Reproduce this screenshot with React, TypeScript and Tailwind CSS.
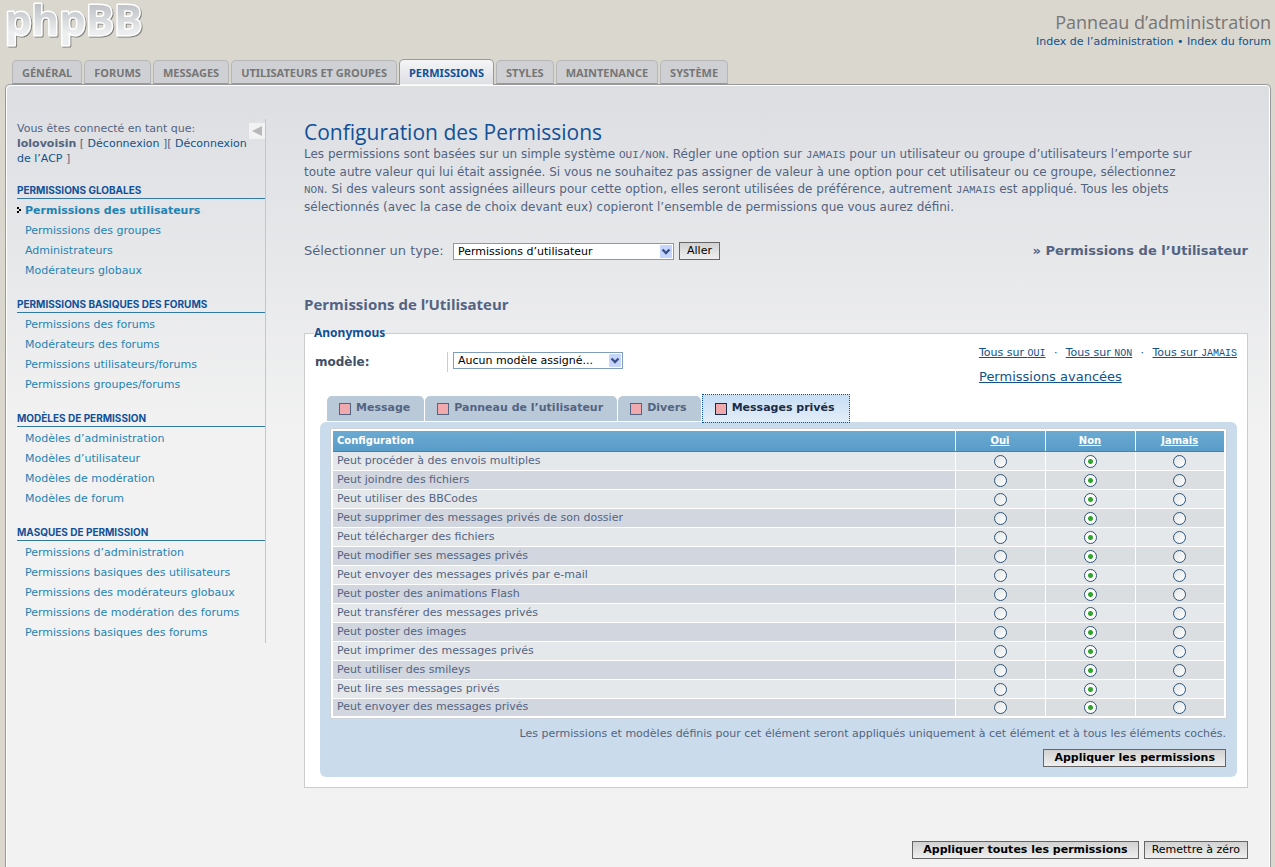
import React, { useState } from "react";
import clsx from "clsx";

const TABS = [
  "Général",
  "Forums",
  "Messages",
  "Utilisateurs et groupes",
  "Permissions",
  "Styles",
  "Maintenance",
  "Système",
];

const MENU = [
  {
    title: "Permissions globales",
    links: [
      "Permissions des utilisateurs",
      "Permissions des groupes",
      "Administrateurs",
      "Modérateurs globaux",
    ],
  },
  {
    title: "Permissions basiques des forums",
    links: [
      "Permissions des forums",
      "Modérateurs des forums",
      "Permissions utilisateurs/forums",
      "Permissions groupes/forums",
    ],
  },
  {
    title: "Modèles de permission",
    links: [
      "Modèles d’administration",
      "Modèles d’utilisateur",
      "Modèles de modération",
      "Modèles de forum",
    ],
  },
  {
    title: "Masques de permission",
    links: [
      "Permissions d’administration",
      "Permissions basiques des utilisateurs",
      "Permissions des modérateurs globaux",
      "Permissions de modération des forums",
      "Permissions basiques des forums",
    ],
  },
];

const CATEGORIES = ["Message", "Panneau de l’utilisateur", "Divers", "Messages privés"];

const OPTIONS = [
  "Peut procéder à des envois multiples",
  "Peut joindre des fichiers",
  "Peut utiliser des BBCodes",
  "Peut supprimer des messages privés de son dossier",
  "Peut télécharger des fichiers",
  "Peut modifier ses messages privés",
  "Peut envoyer des messages privés par e-mail",
  "Peut poster des animations Flash",
  "Peut transférer des messages privés",
  "Peut poster des images",
  "Peut imprimer des messages privés",
  "Peut utiliser des smileys",
  "Peut lire ses messages privés",
  "Peut envoyer des messages privés",
];

const VALUES = ["Oui", "Non", "Jamais"];

const Logo = () => (
  <svg width="150" height="50" role="img" aria-label="phpBB" className="overflow-visible">
    <defs>
      <linearGradient id="logo-fill" x1="0" y1="0" x2="0" y2="1">
        <stop offset="0.2" stopColor="#b9bdc1" />
        <stop offset="0.75" stopColor="#eceeef" />
      </linearGradient>
      <filter id="logo-shadow" x="-10%" y="-10%" width="120%" height="130%">
        <feDropShadow dx="1" dy="1" stdDeviation="0.7" floodColor="#77756f" floodOpacity="0.9" />
      </filter>
    </defs>
    <text
      x="0"
      y="35"
      fontFamily="'Open Sans', sans-serif"
      fontWeight="700"
      fontSize="42"
      fill="url(#logo-fill)"
      stroke="#fff"
      strokeWidth="3"
      strokeLinejoin="round"
      paintOrder="stroke"
      filter="url(#logo-shadow)"
    >
      phpBB
    </text>
  </svg>
);

const Code = ({ children }: { children: React.ReactNode }) => (
  <code className="font-['Liberation_Mono',monospace] text-[11px]">{children}</code>
);

interface SelectProps {
  id: string;
  value: string;
  className: string;
}

const Select = ({ id, value, className }: SelectProps) => (
  <span className={clsx("relative inline-flex", className)}>
    <select
      id={id}
      defaultValue={value}
      className="h-[17px] w-full appearance-none border border-[#7f9db9] bg-white pr-4 pl-1 text-[11px] leading-[15px] text-black"
    >
      <option>{value}</option>
    </select>
    <svg
      viewBox="0 0 12 13"
      className="pointer-events-none absolute top-0.5 right-0.5 h-[13px] w-3"
      aria-hidden="true"
    >
      <rect width="12" height="13" rx="1" fill="#c6d5fb" />
      <path d="M2.5 4.5 6 8l3.5-3.5" fill="none" stroke="#3c5287" strokeWidth="2.4" />
    </svg>
  </span>
);

interface ButtonProps {
  children: React.ReactNode;
  bold?: boolean;
}

const Button = ({ children, bold }: ButtonProps) => (
  <button
    type="button"
    className={clsx(
      "h-[18px] border border-[#666] bg-linear-to-b from-[#d2d2d2] to-[#efefef] text-[11px] leading-4 whitespace-nowrap text-black",
      bold ? "px-2.5 font-bold" : "px-[7px]"
    )}
  >
    {children}
  </button>
);

const Header = () => (
  <header className="flex h-[59px] items-start justify-between pr-1 pl-[5px]">
    <Logo />
    <div className="pt-2.5 text-right">
      <p className="font-['Open_Sans',sans-serif] text-lg leading-6 text-[#767676]">
        Panneau d’administration
      </p>
      <p className="text-[11px] leading-4 text-[#105289]">
        <a href="#">Index de l’administration</a> • <a href="#">Index du forum</a>
      </p>
    </div>
  </header>
);

const Tabs = () => (
  <nav className="relative z-10 -mb-px flex items-end gap-0.5 pl-3 font-['Noto_Sans',sans-serif] text-[11px] font-bold uppercase">
    {TABS.map((tab) => (
      <a
        key={tab}
        href="#"
        className={clsx(
          "rounded-t-[5px] border px-[9px] whitespace-nowrap",
          tab === "Permissions"
            ? "h-[26px] border-[#999] border-b-transparent bg-linear-to-b from-[#f4f5f6] to-[#dddfe3] leading-[25px] text-[#115098]"
            : "mb-px h-6 border-[#b5b6b8] border-b-[#999] bg-[#cfd0d3] leading-[23px] text-[#767676]"
        )}
      >
        {tab}
      </a>
    ))}
  </nav>
);

const Sidebar = () => (
  <aside className="relative w-[249px] shrink-0 border-r border-[#c4c6c9] pt-0.5">
    <button
      type="button"
      aria-label="Masquer le menu"
      className="absolute top-1 right-0 flex h-4 w-4 items-center justify-center bg-[#f2f2f2]"
    >
      <svg viewBox="0 0 10 10" className="h-2.5 w-2.5">
        <path d="M0 5 10 0v10z" fill="#b7b8ba" />
      </svg>
    </button>
    <p className="text-[11px] leading-[15px] whitespace-nowrap text-[#536482]">
      Vous êtes connecté en tant que:
      <br />
      <strong>lolovoisin</strong> [{" "}
      <a href="#" className="text-[#105289]">
        Déconnexion
      </a>{" "}
      ][{" "}
      <a href="#" className="text-[#105289]">
        Déconnexion
        <br />
        de l’ACP
      </a>{" "}
      ]
    </p>
    {MENU.map((block, i) => (
      <section key={block.title} className={i === 0 ? "mt-4" : "mt-[15px]"}>
        <h2 className="h-[17px] border-b border-[#327aa5] font-['Inter',sans-serif] text-[10px] leading-4 font-bold whitespace-nowrap text-[#115098] uppercase">
          {block.title}
        </h2>
        <ul className="pt-0.5">
          {block.links.map((link) => {
            const active = link === "Permissions des utilisateurs";
            return (
              <li key={link} className="relative pl-2 text-[11px] leading-5">
                {active && (
                  <svg viewBox="0 0 4 6" className="absolute top-1.5 left-0 h-1.5 w-1">
                    <path d="M0 0h2v2h2v2H2v2H0V4h2V2H0z" fill="#000" />
                  </svg>
                )}
                <a
                  href="#"
                  className={clsx("whitespace-nowrap text-[#1f83b4]", active && "font-bold")}
                >
                  {link}
                </a>
              </li>
            );
          })}
        </ul>
      </section>
    ))}
  </aside>
);

const PermissionTable = () => (
  <table className="w-full border-2 border-white bg-white text-[11px] outline outline-[#ccd3da]">
    <thead>
      <tr className="h-[21px] bg-linear-to-b from-[#6cabd3] to-[#589cc8] text-[10px] text-white">
        <th className="border-b border-b-[#3f85b2] px-1 text-left font-bold">Configuration</th>
        {VALUES.map((value) => (
          <th
            key={value}
            className="w-[90px] border-b border-l border-b-[#3f85b2] border-l-white font-bold"
          >
            <a href="#" className="underline">
              {value}
            </a>
          </th>
        ))}
      </tr>
    </thead>
    <tbody className="text-[#536482]">
      {OPTIONS.map((option, row) => (
        <tr key={option} className="h-[19px] leading-4">
          <th
            scope="row"
            className={clsx(
              "px-1 text-left font-normal",
              row > 0 && "border-t border-white",
              row % 2 ? "bg-[#d2d6de]" : "bg-[#e4e8eb]"
            )}
          >
            {option}
          </th>
          {VALUES.map((value) => (
            <td
              key={value}
              className={clsx(
                "border-l border-white",
                row > 0 && "border-t",
                row % 2 ? "bg-[#dadee1]" : "bg-[#e4e8eb]"
              )}
            >
              <input
                type="radio"
                name={`option-${row}`}
                aria-label={`${option} : ${value}`}
                defaultChecked={value === "Non"}
                className="mx-auto mt-px block h-[13px] w-[13px] appearance-none rounded-full border border-[#2c5278] bg-linear-to-br from-[#e2e5e4] to-white checked:bg-[radial-gradient(circle,#2fa52b_0_2px,#fff_3px)]"
              />
            </td>
          ))}
        </tr>
      ))}
    </tbody>
  </table>
);

const PermissionPanel = () => {
  const [category, setCategory] = useState("Messages privés");

  return (
    <fieldset className="mt-[9px] border border-[#ccc] bg-white px-2.5 pb-2.5">
      <legend className="-ml-px font-['Noto_Sans',sans-serif] text-xs leading-4 font-bold text-[#115098]">
        Anonymous
      </legend>
      <div className="flex items-start justify-between">
        <div className="flex pt-[11px]">
          <label htmlFor="role" className="w-[132px] text-xs leading-5 font-bold text-[#425067]">
            modèle:
          </label>
          <div className="flex border-l border-[#ccc] pl-[5px]">
            <Select id="role" value="Aucun modèle assigné..." className="w-[170px]" />
          </div>
        </div>
        <div className="w-[258px] pt-1 text-[#105289]">
          <p className="flex justify-between text-[11px] leading-4 whitespace-nowrap">
            {VALUES.map((value, i) => (
              <React.Fragment key={value}>
                {i > 0 && <span>·</span>}
                <a href="#" className="underline">
                  Tous sur{" "}
                  <span className="font-['Liberation_Mono',monospace] text-[10px] uppercase">
                    {value}
                  </span>
                </a>
              </React.Fragment>
            ))}
          </p>
          <p className="mt-[5px] text-[13px] leading-5">
            <a href="#" className="underline">
              Permissions avancées
            </a>
          </p>
        </div>
      </div>

      <div className="mt-[7px] -mb-px ml-3 flex h-[29px] items-end gap-px">
        {CATEGORIES.map((name) => (
          <button
            key={name}
            type="button"
            onClick={() => setCategory(name)}
            className={clsx(
              "flex items-center gap-[5px] pr-3.5 pl-3 text-[11px] font-bold whitespace-nowrap",
              name === category
                ? "relative z-10 h-[29px] border border-dotted border-[#115098] bg-linear-to-b from-[#c6def4] to-[#e3eef8] text-[#1c2b45]"
                : "mb-0.5 h-[25px] rounded-t-[5px] bg-[#b9c9d7] text-[#536482]"
            )}
          >
            <span
              className={clsx(
                "h-3 w-3 border bg-[#f0a9ad]",
                name === category ? "border-[#1c2b45]" : "border-[#536482]"
              )}
            />
            {name}
          </button>
        ))}
      </div>

      <div className="ml-[5px] rounded-md bg-[#cadceb] px-[11px] pt-[7px] pb-2.5">
        <PermissionTable />
        <p className="mt-2 text-right text-[11px] leading-4 text-[#536482]">
          Les permissions et modèles définis pour cet élément seront appliqués uniquement à cet
          élément et à tous les éléments cochés.
        </p>
        <div className="mt-[7px] flex justify-end">
          <Button bold>Appliquer les permissions</Button>
        </div>
      </div>
    </fieldset>
  );
};

const Main = () => (
  <main className="min-w-0 flex-1">
    <h1 className="font-['Open_Sans',sans-serif] text-[21px] leading-[27px] text-[#115098]">
      Configuration des Permissions
    </h1>
    <p className="text-xs leading-[17px] text-[#536482]">
      Les permissions sont basées sur un simple système <Code>OUI/NON</Code>. Régler une option sur{" "}
      <Code>JAMAIS</Code> pour un utilisateur ou groupe d’utilisateurs l’emporte sur
      <br />
      toute autre valeur qui lui était assignée. Si vous ne souhaitez pas assigner de valeur à une
      option pour cet utilisateur ou ce groupe, sélectionnez
      <br />
      <Code>NON</Code>. Si des valeurs sont assignées ailleurs pour cette option, elles seront
      utilisées de préférence, autrement <Code>JAMAIS</Code> est appliqué. Tous les objets
      <br />
      sélectionnés (avec la case de choix devant eux) copieront l’ensemble de permissions que vous
      aurez défini.
    </p>

    <div className="mt-[25px] flex items-center justify-between text-[13px] leading-5 text-[#536482]">
      <form className="flex items-center gap-[5px]">
        <label htmlFor="type" className="w-36 whitespace-nowrap">
          Sélectionner un type:
        </label>
        <Select id="type" value="Permissions d’utilisateur" className="w-[221px]" />
        <Button>Aller</Button>
      </form>
      <p className="font-bold">» Permissions de l’Utilisateur</p>
    </div>

    <h2 className="mt-[31px] font-['Open_Sans',sans-serif] text-[15px] leading-6 font-bold text-[#536482]">
      Permissions de l’Utilisateur
    </h2>
    <PermissionPanel />

    <div className="mt-[53px] flex justify-end gap-[5px]">
      <Button bold>Appliquer toutes les permissions</Button>
      <Button>Remettre à zéro</Button>
    </div>
  </main>
);

export default function App() {
  return (
    <div className="flex min-h-screen flex-col bg-[#dad7cf] font-['DejaVu_Sans',Verdana,sans-serif]">
      <Header />
      <Tabs />
      <div className="mr-1 ml-[5px] flex-1 rounded-t-[5px] border border-b-0 border-[#999] bg-[#f2f2f2] bg-[linear-gradient(#dcdee2,#f2f2f2_350px)] bg-no-repeat pb-2 shadow-[inset_1px_1px_0_#fff,inset_-1px_0_0_#fff]">
        <div className="flex items-start gap-[38px] pt-[34px] pr-[22px] pl-[11px]">
          <Sidebar />
          <Main />
        </div>
      </div>
    </div>
  );
}
